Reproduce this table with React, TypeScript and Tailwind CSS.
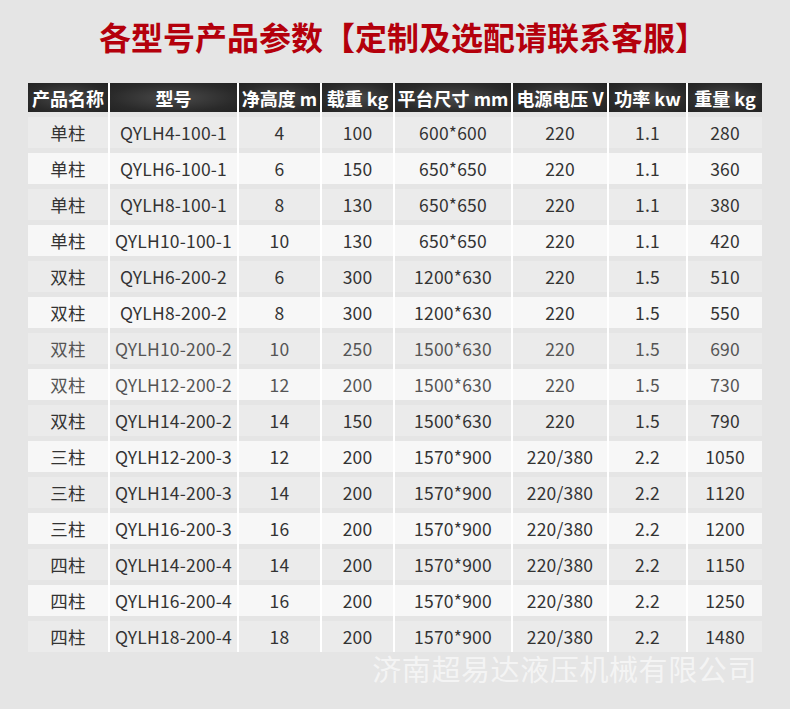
const COLS = ["产品名称", "型号", "净高度 m", "载重 kg", "平台尺寸 mm", "电源电压 V", "功率 kw", "重量 kg"];

const ROWS: string[][] = [
  ["单柱", "QYLH4-100-1", "4", "100", "600*600", "220", "1.1", "280"],
  ["单柱", "QYLH6-100-1", "6", "150", "650*650", "220", "1.1", "360"],
  ["单柱", "QYLH8-100-1", "8", "130", "650*650", "220", "1.1", "380"],
  ["单柱", "QYLH10-100-1", "10", "130", "650*650", "220", "1.1", "420"],
  ["双柱", "QYLH6-200-2", "6", "300", "1200*630", "220", "1.5", "510"],
  ["双柱", "QYLH8-200-2", "8", "300", "1200*630", "220", "1.5", "550"],
  ["双柱", "QYLH10-200-2", "10", "250", "1500*630", "220", "1.5", "690"],
  ["双柱", "QYLH12-200-2", "12", "200", "1500*630", "220", "1.5", "730"],
  ["双柱", "QYLH14-200-2", "14", "150", "1500*630", "220", "1.5", "790"],
  ["三柱", "QYLH12-200-3", "12", "200", "1570*900", "220/380", "2.2", "1050"],
  ["三柱", "QYLH14-200-3", "14", "200", "1570*900", "220/380", "2.2", "1120"],
  ["三柱", "QYLH16-200-3", "16", "200", "1570*900", "220/380", "2.2", "1200"],
  ["四柱", "QYLH14-200-4", "14", "200", "1570*900", "220/380", "2.2", "1150"],
  ["四柱", "QYLH16-200-4", "16", "200", "1570*900", "220/380", "2.2", "1250"],
  ["四柱", "QYLH18-200-4", "18", "200", "1570*900", "220/380", "2.2", "1480"],
];

// rows whose print came out a bit washed in the source
const FADED = new Set([6, 7]);

export default function App() {
  return (
    <div className="w-[790px] h-[709px] bg-[#e5e5e5] font-['Noto_Sans_CJK_SC',sans-serif] pt-[16px] overflow-hidden">
      <h1 className="text-center text-[32px] leading-[40px] font-bold text-[#b4000c] pl-[16px]">
        各型号产品参数【定制及选配请联系客服】
      </h1>

      <div className="w-[734px] mx-auto mt-[27px]">
        <div className="grid grid-cols-[80px_127px_81px_71px_116px_94px_77px_74px] gap-x-[2px] bg-white">
          {COLS.map((c) => (
            <div
              key={c}
              className="h-[29px] flex items-center justify-center whitespace-nowrap overflow-hidden bg-[radial-gradient(ellipse_at_center,#4a4a4a_0%,#2a2a2a_70%,#232323_100%)] text-white text-[18px] font-bold leading-none"
            >
              {c}
            </div>
          ))}
        </div>

        {ROWS.map((r, i) => (
          <div
            key={i}
            className="grid grid-cols-[80px_127px_81px_71px_116px_94px_77px_74px] gap-x-[2px] bg-white"
          >
            {r.map((v, j) => (
              <div
                key={j}
                className={`h-[36px] border-t-[5px] border-[#e5e5e5] flex items-center justify-center whitespace-nowrap text-[17.5px] tracking-[0.2px] leading-none ${
                  i % 2 === 0 ? "bg-[#ebebeb]" : "bg-[#f7f7f7]"
                } ${FADED.has(i) ? "text-[#555]" : "text-[#333]"}`}
              >
                {v}
              </div>
            ))}
          </div>
        ))}
      </div>

      <div className="flex justify-end pr-[33px] -mt-[4px]">
        <span className="text-[29px] leading-[40px] text-white/60 tracking-[0.6px]">
          济南超易达液压机械有限公司
        </span>
      </div>
    </div>
  );
}
